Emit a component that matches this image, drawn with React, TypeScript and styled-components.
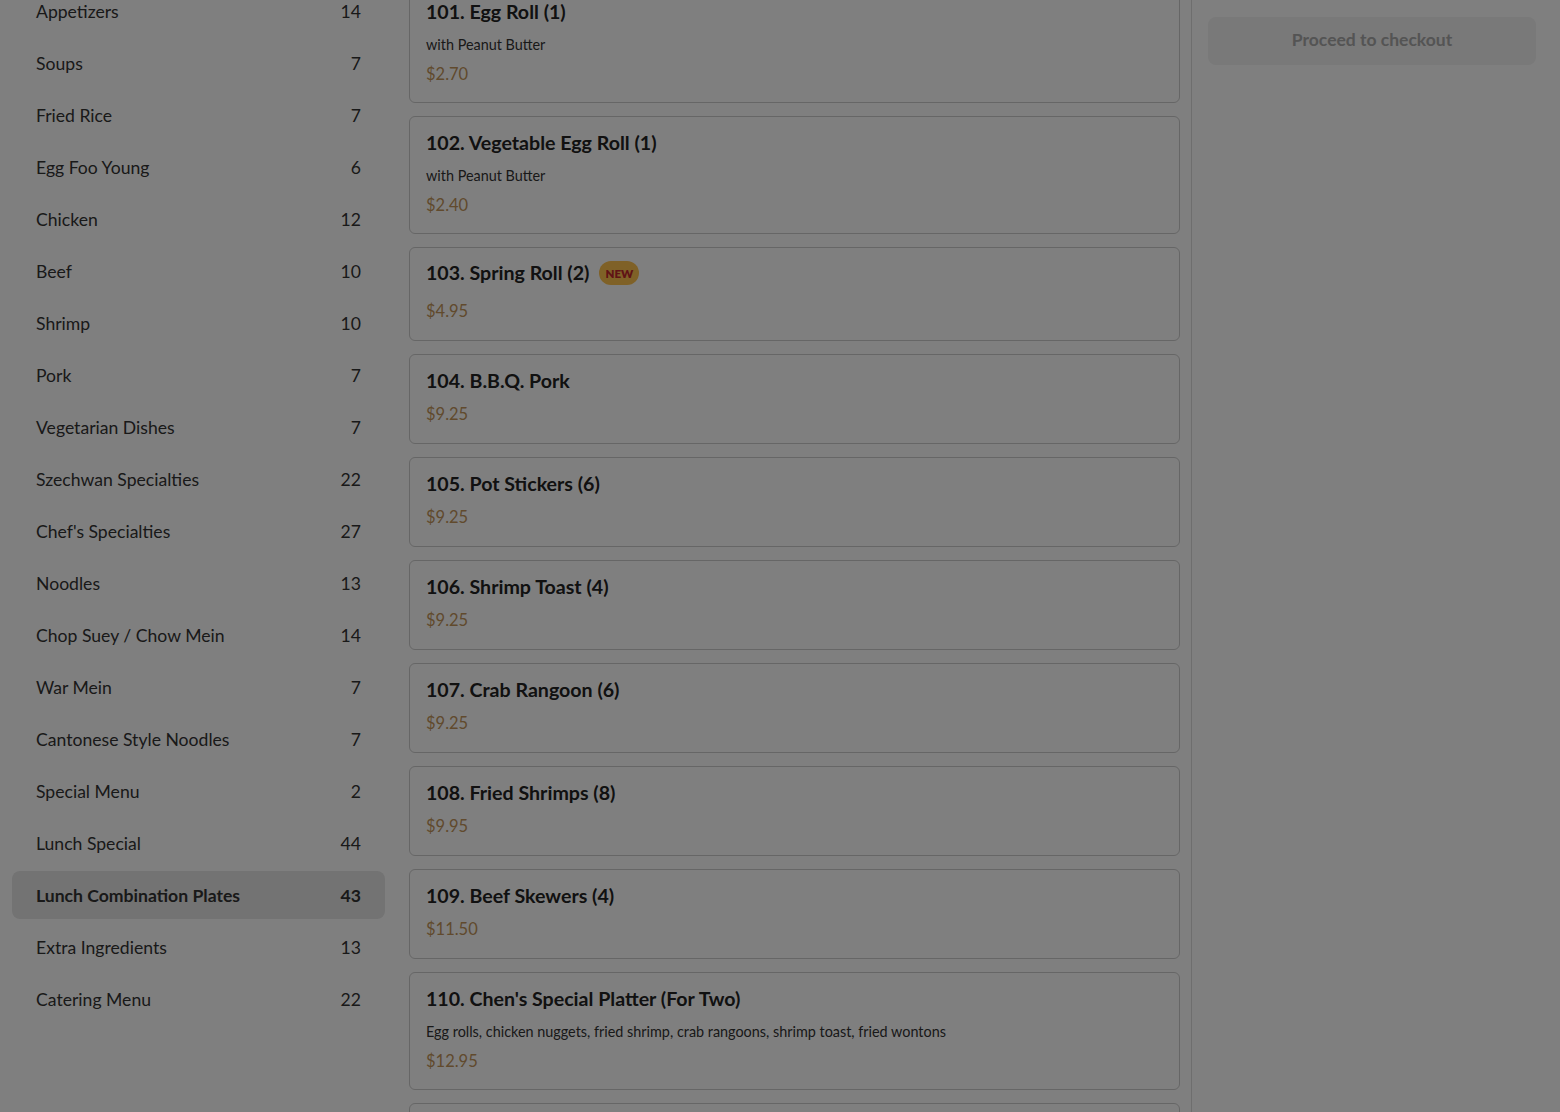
import styled, { createGlobalStyle } from 'styled-components';

const GlobalStyle = createGlobalStyle`
  html, body {
    margin: 0;
    height: 100%;
    overflow: hidden;
    background: #ffffff;
  }
  body {
    font-family: Lato, "Noto Sans", "Liberation Sans", sans-serif;
    color: #333333;
  }
  * {
    box-sizing: border-box;
  }
`;

interface Category {
  name: string;
  count: number;
  active?: boolean;
}

interface MenuItem {
  title: string;
  description?: string;
  price: string;
  isNew?: boolean;
}

const categories: Category[] = [
  { name: 'Appetizers', count: 14 },
  { name: 'Soups', count: 7 },
  { name: 'Fried Rice', count: 7 },
  { name: 'Egg Foo Young', count: 6 },
  { name: 'Chicken', count: 12 },
  { name: 'Beef', count: 10 },
  { name: 'Shrimp', count: 10 },
  { name: 'Pork', count: 7 },
  { name: 'Vegetarian Dishes', count: 7 },
  { name: 'Szechwan Specialties', count: 22 },
  { name: "Chef's Specialties", count: 27 },
  { name: 'Noodles', count: 13 },
  { name: 'Chop Suey / Chow Mein', count: 14 },
  { name: 'War Mein', count: 7 },
  { name: 'Cantonese Style Noodles', count: 7 },
  { name: 'Special Menu', count: 2 },
  { name: 'Lunch Special', count: 44 },
  { name: 'Lunch Combination Plates', count: 43, active: true },
  { name: 'Extra Ingredients', count: 13 },
  { name: 'Catering Menu', count: 22 },
];

const items: MenuItem[] = [
  { title: '101. Egg Roll (1)', description: 'with Peanut Butter', price: '$2.70' },
  { title: '102. Vegetable Egg Roll (1)', description: 'with Peanut Butter', price: '$2.40' },
  { title: '103. Spring Roll (2)', price: '$4.95', isNew: true },
  { title: '104. B.B.Q. Pork', price: '$9.25' },
  { title: '105. Pot Stickers (6)', price: '$9.25' },
  { title: '106. Shrimp Toast (4)', price: '$9.25' },
  { title: '107. Crab Rangoon (6)', price: '$9.25' },
  { title: '108. Fried Shrimps (8)', price: '$9.95' },
  { title: '109. Beef Skewers (4)', price: '$11.50' },
  {
    title: "110. Chen's Special Platter (For Two)",
    description: 'Egg rolls, chicken nuggets, fried shrimp, crab rangoons, shrimp toast, fried wontons',
    price: '$12.95',
  },
  { title: '111. Fried Wonton (10)', price: '$6.95' },
];

export default function App() {
  return (
    <>
      <GlobalStyle />
      <Layout>
        <Sidebar>
          {categories.map((category) => (
            <CategoryRow key={category.name} $active={category.active}>
              <span>{category.name}</span>
              <span>{category.count}</span>
            </CategoryRow>
          ))}
        </Sidebar>

        <MenuColumn>
          {items.map((item) => (
            <ItemCard key={item.title} $hasDescription={!!item.description}>
              <TitleRow $hasBadge={item.isNew}>
                <ItemTitle>{item.title}</ItemTitle>
                {item.isNew && <NewBadge>NEW</NewBadge>}
              </TitleRow>
              {item.description && <Description>{item.description}</Description>}
              <Price $afterBadge={item.isNew}>{item.price}</Price>
            </ItemCard>
          ))}
        </MenuColumn>

        <CartPanel>
          <CheckoutButton disabled>Proceed to checkout</CheckoutButton>
        </CartPanel>
      </Layout>
      <Backdrop />
    </>
  );
}

const Layout = styled.div`
  display: flex;
  align-items: flex-start;
  height: 1112px;
  overflow: hidden;
`;

const Sidebar = styled.nav`
  width: 385px;
  flex-shrink: 0;
  margin-top: -13px;
  padding-left: 12px;

  display: flex;
  flex-direction: column;
  gap: 4px;
`;

const CategoryRow = styled.div<{ $active?: boolean }>`
  height: 48px;
  padding: 0 24px;
  border-radius: 8px;

  display: flex;
  align-items: center;
  justify-content: space-between;

  font-size: 17.6px;
  font-weight: ${({ $active }) => ($active ? 700 : 400)};
  color: #333333;
  background-color: ${({ $active }) => ($active ? '#e6e6e6' : 'transparent')};
`;

const MenuColumn = styled.main`
  width: 806px;
  flex-shrink: 0;
  margin-top: -15px;
  padding: 0 11px 0 24px;

  display: flex;
  flex-direction: column;
  gap: 13px;
`;

const ItemCard = styled.div<{ $hasDescription?: boolean }>`
  border: 1px solid #cccccc;
  border-radius: 6px;
  padding: 16px 16px ${({ $hasDescription }) => ($hasDescription ? '17px' : '18px')};

  display: flex;
  flex-direction: column;
`;

const TitleRow = styled.div<{ $hasBadge?: boolean }>`
  display: flex;
  align-items: center;
  gap: 10px;
  min-height: 20px;
  margin-top: ${({ $hasBadge }) => ($hasBadge ? '-3px' : '0')};
`;

const ItemTitle = styled.h3`
  margin: 0;
  font-size: 19.6px;
  line-height: 20px;
  font-weight: 700;
  color: #222222;
`;

const NewBadge = styled.span`
  height: 24px;
  padding: 0 6px;
  border-radius: 12px;

  display: inline-flex;
  align-items: center;

  font-size: 11.5px;
  font-weight: 800;
  color: #c0262b;
  background-color: #ffc24f;
`;

const Description = styled.p`
  margin: 13px 0 0;
  font-size: 14.4px;
  line-height: 20px;
  color: #333333;
`;

const Price = styled.div<{ $afterBadge?: boolean }>`
  margin-top: ${({ $afterBadge }) => ($afterBadge ? '15px' : '12px')};
  font-size: 16.5px;
  line-height: 22px;
  color: #c2945a;

  ${Description} + & {
    margin-top: 8px;
  }
`;

const CartPanel = styled.aside`
  flex: 1;
  align-self: stretch;
  border-left: 1px solid #dddddd;
  padding: 17px 24px 0 16px;
`;

const CheckoutButton = styled.button`
  width: 100%;
  height: 48px;
  padding: 0 0 4px;
  border: none;
  border-radius: 8px;

  font-family: inherit;
  font-size: 17.5px;
  font-weight: 700;
  color: #a8a8a8;
  background-color: #f2f2f2;
`;

const Backdrop = styled.div`
  position: fixed;
  inset: 0;
  background-color: rgba(0, 0, 0, 0.5);
`;
